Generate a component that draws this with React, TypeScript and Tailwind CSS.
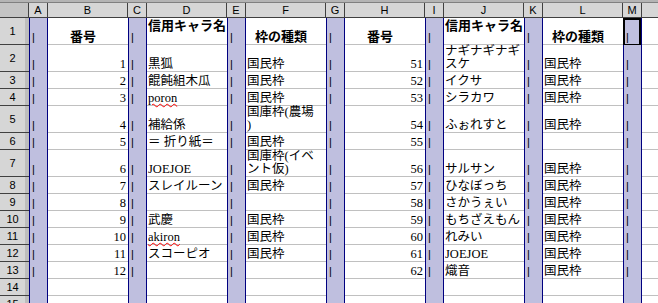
import React from "react";

type Cell = {
  t?: string | string[];
  align?: "l" | "r" | "c";
  bold?: boolean;
  top?: boolean;
  wavy?: boolean;
};

type Row = { tall: boolean; bars: boolean; cells: Cell[] };

const L = (t: string | string[]): Cell => ({ t, align: "l" });
const R = (t: string): Cell => ({ t, align: "r" });
const E: Cell = {};

const rows: Row[] = [
  {
    tall: true,
    bars: true,
    cells: [
      { t: "番号", align: "c", bold: true },
      { t: "信用キャラ名", align: "l", bold: true, top: true },
      { t: "枠の種類", align: "c", bold: true },
      { t: "番号", align: "c", bold: true },
      { t: "信用キャラ名", align: "l", bold: true, top: true },
      { t: "枠の種類", align: "c", bold: true },
    ],
  },
  { tall: true, bars: true, cells: [R("1"), L("黒狐"), L("国民枠"), R("51"), L(["ナギナギナギ", "スケ"]), L("国民枠")] },
  { tall: false, bars: true, cells: [R("2"), L("餛飩組木瓜"), L("国民枠"), R("52"), L("イクサ"), L("国民枠")] },
  { tall: false, bars: true, cells: [R("3"), { t: "poron", align: "l", wavy: true }, L("国民枠"), R("53"), L("シラカワ"), L("国民枠")] },
  { tall: true, bars: true, cells: [R("4"), L("補給係"), L(["国庫枠(農場", ")"]), R("54"), L("ふぉれすと"), L("国民枠")] },
  { tall: false, bars: true, cells: [R("5"), L("＝ 折り紙＝"), L("国民枠"), R("55"), E, E] },
  { tall: true, bars: true, cells: [R("6"), L("JOEJOE"), L(["国庫枠(イベ", "ント仮)"]), R("56"), L("サルサン"), L("国民枠")] },
  { tall: false, bars: true, cells: [R("7"), L("スレイルーン"), L("国民枠"), R("57"), L("ひなぼっち"), L("国民枠")] },
  { tall: false, bars: true, cells: [R("8"), E, E, R("58"), L("さかうぇい"), L("国民枠")] },
  { tall: false, bars: true, cells: [R("9"), L("武慶"), L("国民枠"), R("59"), L("もちざえもん"), L("国民枠")] },
  { tall: false, bars: true, cells: [R("10"), { t: "akiron", align: "l", wavy: true }, L("国民枠"), R("60"), L("れみい"), L("国民枠")] },
  { tall: false, bars: true, cells: [R("11"), L("スコーピオ"), L("国民枠"), R("61"), L("JOEJOE"), L("国民枠")] },
  { tall: false, bars: true, cells: [R("12"), E, E, R("62"), L("熾音"), L("国民枠")] },
  { tall: false, bars: false, cells: [E, E, E, E, E, E] },
  { tall: false, bars: false, cells: [E, E, E, E, E, E] },
];

const letters = ["A", "B", "C", "D", "E", "F", "G", "H", "I", "J", "K", "L", "M"];

function Blue({ bar, active }: { bar: boolean; active?: boolean }) {
  return (
    <div className="relative w-[19px] shrink-0 h-full bg-[#bfbfdf] border-x border-[#000080] flex items-end pl-[2px] pb-[2px] leading-[11px] text-[11px] font-['Liberation_Sans',sans-serif]">
      {bar ? "|" : ""}
      {active && <div className="absolute -left-[1px] right-0 top-0 -bottom-[1px] border-2 border-black" />}
    </div>
  );
}

function White({ c }: { c: Cell }) {
  const lines = c.t === undefined ? [] : Array.isArray(c.t) ? c.t : [c.t];
  const justify =
    c.align === "r" ? "justify-end pr-[2px]" : c.align === "c" ? "justify-center pr-[10px]" : "justify-start pl-[1px]";
  const items = c.top ? "items-start" : "items-end";
  return (
    <div className={`w-[80px] shrink-0 h-full border-b border-[#c0c0c0] flex whitespace-nowrap ${justify} ${items}`}>
      <div className="flex flex-col">
        {lines.map((ln, i) => (
          <span
            key={i}
            className={`${c.bold ? "font-bold text-[13px] leading-[15px]" : "text-[12.5px] leading-[13px]"} ${
              c.wavy ? "underline decoration-wavy decoration-[#ff0000] decoration-1 underline-offset-[1px]" : ""
            }`}
          >
            {ln}
          </span>
        ))}
      </div>
    </div>
  );
}

export default function App() {
  return (
    <div className="w-[658px] h-[303px] overflow-hidden bg-white flex flex-col text-black font-['Liberation_Serif','Noto_Sans_CJK_JP',serif]">
      <div className="h-[3px] shrink-0 bg-[#b4b4b4] border-b border-[#808080]" />
      <div className="h-[15px] shrink-0 flex bg-[#d6d6d6] border-b border-[#404040] font-['Liberation_Sans',sans-serif] text-[11px] leading-[14px]">
        <div className="w-[29px] shrink-0 h-full bg-[#c4c4c4] border-r border-[#404040]" />
        {letters.map((l, i) => (
          <div
            key={l}
            className={`${i % 2 === 0 ? "w-[19px]" : "w-[80px]"} shrink-0 h-full border-r border-[#404040] flex items-center justify-center`}
          >
            {l}
          </div>
        ))}
        <div className="flex-1 h-full" />
      </div>
      {rows.map((row, ri) => (
        <div key={ri} className={`flex shrink-0 ${row.tall ? "h-[27px]" : "h-[17px]"}`}>
          <div className="w-[29px] shrink-0 h-full flex bg-[#d6d6d6] border-b border-[#404040]">
            <div className="flex-1 flex items-center justify-center font-['Liberation_Sans',sans-serif] text-[11px]">
              {ri + 1}
            </div>
            <div className="w-[4px] bg-[#bdbdbd]" />
          </div>
          {row.cells.map((c, ci) => (
            <React.Fragment key={ci}>
              <Blue bar={row.bars} />
              <White c={c} />
            </React.Fragment>
          ))}
          <Blue bar={row.bars} active={ri === 0} />
          <div className="flex-1 h-full border-b border-[#c0c0c0]" />
        </div>
      ))}
    </div>
  );
}
